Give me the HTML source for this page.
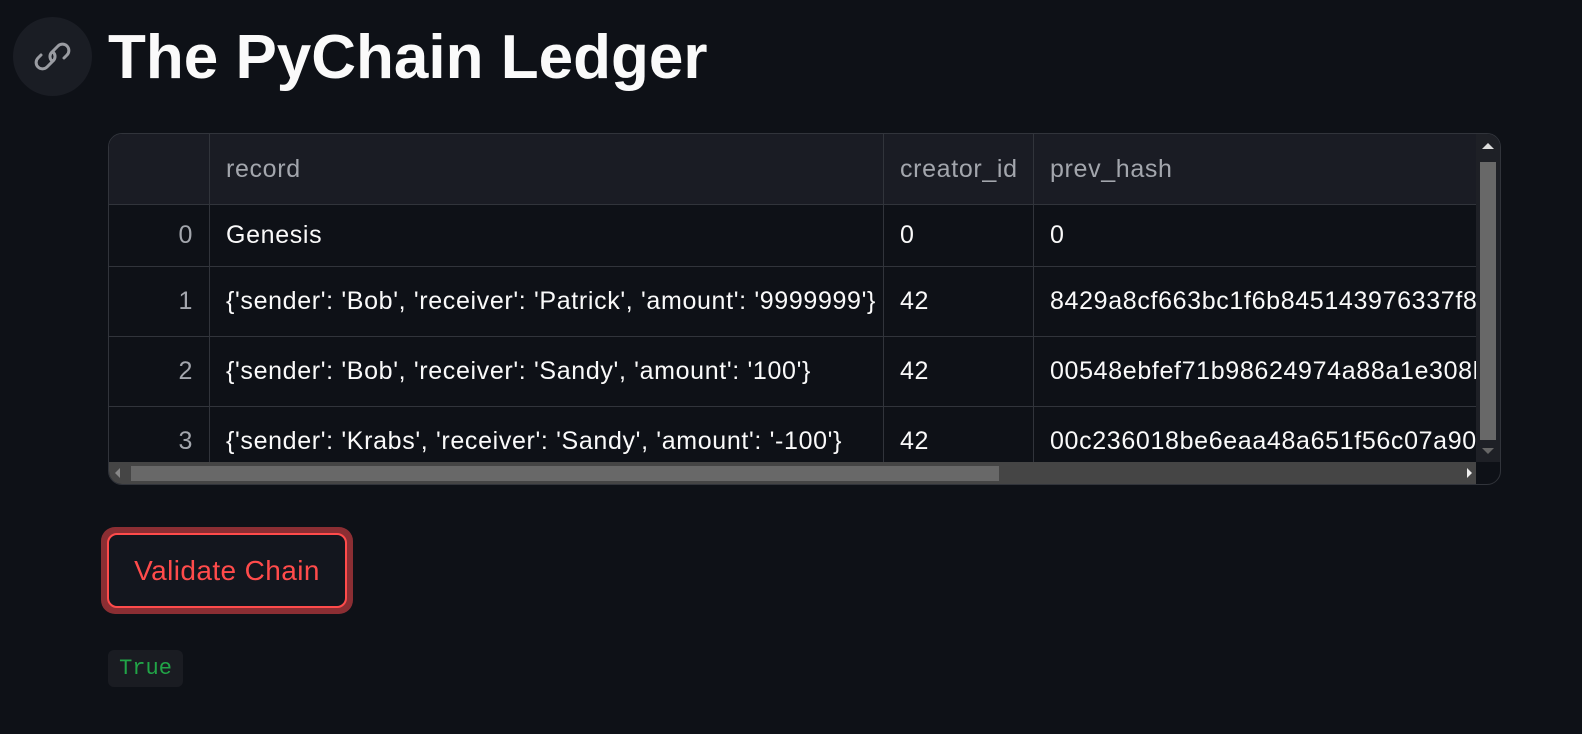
<!DOCTYPE html>
<html><head><style>
body{margin:0;background:#0e1117;width:1582px;height:734px;overflow:hidden;font-family:"Liberation Sans",sans-serif;color:#fafafa;position:relative}
.link{position:absolute;left:13px;top:17px;width:79px;height:79px;border-radius:50%;background:#1a1d24}
h1{position:absolute;left:108px;top:15px;margin:0;font-size:62px;font-weight:bold;letter-spacing:0;line-height:86px}
.tbl{position:absolute;left:108px;top:133px;width:1391px;height:350px;border:1px solid #31343b;border-radius:14px;overflow:hidden;background:#0e1117}
.c{position:absolute;font-size:25px;letter-spacing:0.65px;white-space:nowrap;overflow:hidden;box-sizing:border-box;padding-left:16px;display:flex;align-items:center;border-right:1px solid #31343b;border-bottom:1px solid #31343b}
.h{background:#1a1c24;color:#a3a6ad}
.vs{position:absolute;right:0;top:0;width:24px;height:328px;background:#1e2026}
.hs{position:absolute;left:0;bottom:0;width:1391px;height:22px;background:#454545}
.btn{position:absolute;left:101px;top:527px;width:252px;height:87px;border-radius:14px;background:#8b2e33;}
.btn div{position:absolute;left:6px;top:6px;width:236px;height:71px;border:2px solid #ff4b4b;border-radius:10px;background:#13161e;color:#ff4b4b;font-size:28px;letter-spacing:0.4px;display:flex;align-items:center;justify-content:center}
.tr{position:absolute;left:108px;top:650px;width:75px;height:37px;border-radius:6px;background:#1a1c22;color:#21a447;font-family:"Liberation Mono",monospace;font-size:22px;display:flex;align-items:center;justify-content:center}
</style></head><body>
<div class="link"><svg width="79" height="79" viewBox="0 0 79 79"><g fill="none" stroke="#9a9ca2" stroke-width="3" stroke-linecap="round"><path d="M40 35 a6 6 0 0 1 0 9 l-6 6 a6 6 0 0 1 -9 -9 l3 -3"/><path d="M39 44 a6 6 0 0 1 0 -9 l6 -6 a6 6 0 0 1 9 9 l-3 3"/></g></svg></div>
<h1>The PyChain Ledger</h1>
<div class="tbl">
<div class="c h" style="left:0;top:0;width:101px;height:71px"></div>
<div class="c h" style="left:101px;top:0;width:674px;height:71px">record</div>
<div class="c h" style="left:775px;top:0;width:150px;height:71px">creator_id</div>
<div class="c h" style="left:925px;top:0;width:480px;height:71px;border-right:none">prev_hash</div>

<div class="c" style="left:0;top:71px;width:101px;height:62px;justify-content:flex-end;padding-right:16px;color:#a3a6ad">0</div>
<div class="c" style="left:101px;top:71px;width:674px;height:62px">Genesis</div>
<div class="c" style="left:775px;top:71px;width:150px;height:62px">0</div>
<div class="c" style="left:925px;top:71px;width:445px;height:62px;border-right:none">0</div>

<div class="c" style="left:0;top:133px;width:101px;height:70px;justify-content:flex-end;padding-right:16px;color:#a3a6ad">1</div>
<div class="c" style="left:101px;top:133px;width:674px;height:70px">{'sender': 'Bob', 'receiver': 'Patrick', 'amount': '9999999'}</div>
<div class="c" style="left:775px;top:133px;width:150px;height:70px">42</div>
<div class="c" style="left:925px;top:133px;width:444px;height:70px;border-right:none">8429a8cf663bc1f6b845143976337f857</div>

<div class="c" style="left:0;top:203px;width:101px;height:70px;justify-content:flex-end;padding-right:16px;color:#a3a6ad">2</div>
<div class="c" style="left:101px;top:203px;width:674px;height:70px">{'sender': 'Bob', 'receiver': 'Sandy', 'amount': '100'}</div>
<div class="c" style="left:775px;top:203px;width:150px;height:70px">42</div>
<div class="c" style="left:925px;top:203px;width:444px;height:70px;border-right:none">00548ebfef71b98624974a88a1e308b0</div>

<div class="c" style="left:0;top:273px;width:101px;height:70px;justify-content:flex-end;padding-right:16px;color:#a3a6ad">3</div>
<div class="c" style="left:101px;top:273px;width:674px;height:70px">{'sender': 'Krabs', 'receiver': 'Sandy', 'amount': '-100'}</div>
<div class="c" style="left:775px;top:273px;width:150px;height:70px">42</div>
<div class="c" style="left:925px;top:273px;width:444px;height:70px;border-right:none">00c236018be6eaa48a651f56c07a905c</div>

<div class="vs"><div style="position:absolute;left:4px;top:28px;width:16px;height:278px;background:#686868"></div><div style="position:absolute;left:6px;top:9px;border:6px solid transparent;border-bottom-color:#ddd;border-top:none"></div><div style="position:absolute;left:6px;top:314px;border:6px solid transparent;border-top-color:#666;border-bottom:none"></div></div>
<div class="hs"><div style="position:absolute;left:22px;top:4px;width:868px;height:15px;background:#686868"></div><div style="position:absolute;left:6px;top:6px;border:5px solid transparent;border-right-color:#888;border-left:none"></div><div style="position:absolute;left:1358px;top:6px;border:5px solid transparent;border-left-color:#eee;border-right:none"></div><div style="position:absolute;right:0;top:0;width:24px;height:22px;background:#0e1117"></div></div>
</div>
<div class="btn"><div>Validate Chain</div></div>
<div class="tr">True</div>
</body></html>
